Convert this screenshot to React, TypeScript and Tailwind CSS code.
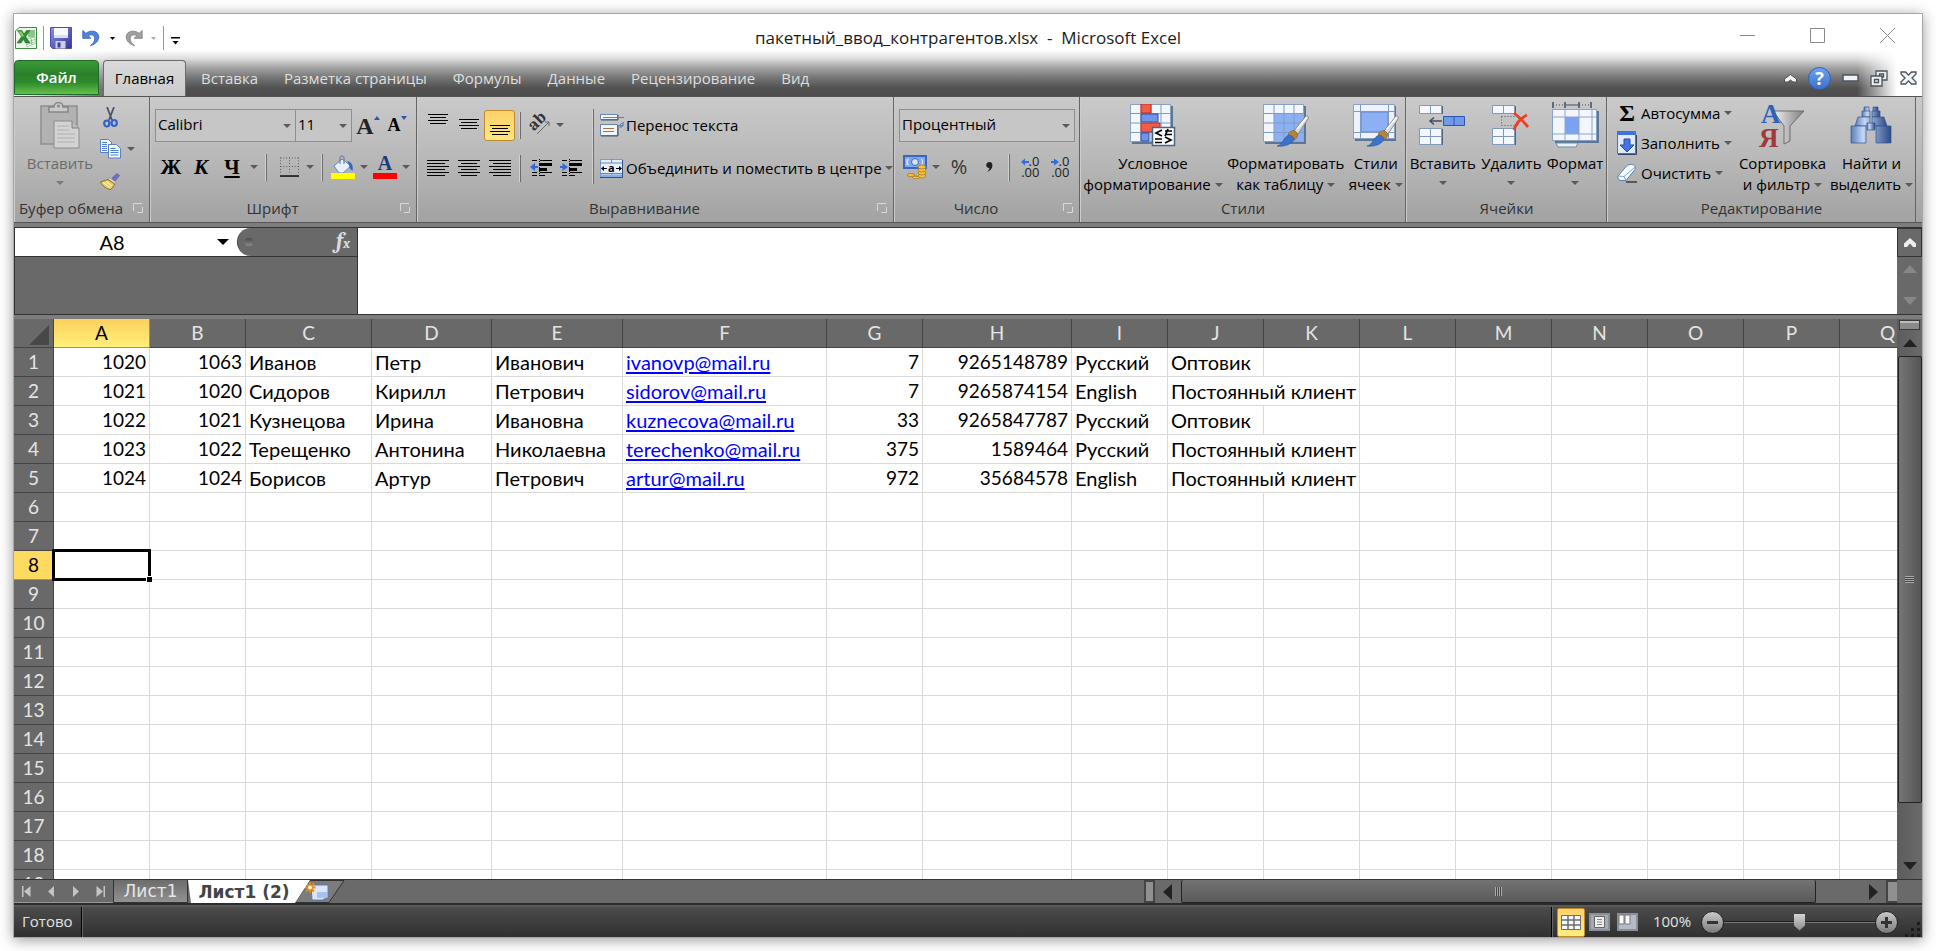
import { useState, type ReactNode } from 'react';
import clsx from 'clsx';

type Cell = string | number;

const COLUMNS = [
  { name: 'A', width: 'w-[96px]' },
  { name: 'B', width: 'w-[96px]' },
  { name: 'C', width: 'w-[126px]' },
  { name: 'D', width: 'w-[120px]' },
  { name: 'E', width: 'w-[131px]' },
  { name: 'F', width: 'w-[204px]' },
  { name: 'G', width: 'w-[96px]' },
  { name: 'H', width: 'w-[149px]' },
  { name: 'I', width: 'w-[96px]' },
  { name: 'J', width: 'w-[96px]' },
  { name: 'K', width: 'w-[96px]' },
  { name: 'L', width: 'w-[96px]' },
  { name: 'M', width: 'w-[96px]' },
  { name: 'N', width: 'w-[96px]' },
  { name: 'O', width: 'w-[96px]' },
  { name: 'P', width: 'w-[96px]' },
  { name: 'Q', width: 'w-[96px]' },
];

const DATA: Cell[][] = [
  [1020, 1063, 'Иванов', 'Петр', 'Иванович', 'ivanovp@mail.ru', 7, 9265148789, 'Русский', 'Оптовик'],
  [1021, 1020, 'Сидоров', 'Кирилл', 'Петрович', 'sidorov@mail.ru', 7, 9265874154, 'English', 'Постоянный клиент'],
  [1022, 1021, 'Кузнецова', 'Ирина', 'Ивановна', 'kuznecova@mail.ru', 33, 9265847787, 'Русский', 'Оптовик'],
  [1023, 1022, 'Терещенко', 'Антонина', 'Николаевна', 'terechenko@mail.ru', 375, 1589464, 'Русский', 'Постоянный клиент'],
  [1024, 1024, 'Борисов', 'Артур', 'Петрович', 'artur@mail.ru', 972, 35684578, 'English', 'Постоянный клиент'],
];

const ROW_COUNT = 19;
const TABS = ['Вставка', 'Разметка страницы', 'Формулы', 'Данные', 'Рецензирование', 'Вид'];

/* ---------- small helpers ---------- */

function Arrow({ className = 'text-[#5a5a5a]' }: { className?: string }) {
  return (
    <svg width="8" height="4" viewBox="0 0 8 4" className={clsx('shrink-0', className)}>
      <path d="M0 0h8L4 4z" fill="currentColor" />
    </svg>
  );
}

function Separator({ className = 'h-[26px]' }: { className?: string }) {
  return <span className={clsx('w-[2px] shrink-0 border-l border-r border-l-[#d2d2d2] border-r-[#6c6c6c]', className)} />;
}

function Tool({ label, className, children }: { label: string; className?: string; children: ReactNode }) {
  return (
    <button type="button" aria-label={label} title={label} className={clsx('flex shrink-0 items-center justify-center', className)}>
      {children}
    </button>
  );
}

function Group({ title, launcher, children }: { title: string; launcher?: boolean; children: ReactNode }) {
  return (
    <section className="flex min-w-0 flex-col border-r border-l border-l-[#cdcdcd] border-r-[#646464]">
      <div className="flex min-h-0 flex-1">{children}</div>
      <div className="flex h-[26px] items-center pb-[2px]">
        <h2 className="flex-1 text-center text-[15px] leading-5 whitespace-nowrap text-[#333]">{title}</h2>
        {launcher && (
          <Tool label={`${title}: параметры`} className="w-[22px]">
            <svg width="10" height="10" viewBox="0 0 10 10" fill="none" stroke="#d6d8dc">
              <path d="M.5 8V.5H9M4 9.5h5.500V4" />
            </svg>
          </Tool>
        )}
      </div>
    </section>
  );
}

function BigButton({ icon, lines, arrow = 'inline', disabled, className }: { icon: ReactNode; lines: string[]; arrow?: 'inline' | 'below'; disabled?: boolean; className?: string }) {
  return (
    <button type="button" className={clsx('flex shrink-0 flex-col items-center text-[15px] leading-[21px] whitespace-nowrap', disabled && 'text-[#6b6b6b]', className)}>
      <span className="flex h-[56px] items-center justify-center">{icon}</span>
      {lines.map((line, i) => (
        <span key={line} className="flex items-center gap-[4px]">
          {line}
          {arrow === 'inline' && i === lines.length - 1 && <Arrow />}
        </span>
      ))}
      {arrow === 'below' && (
        <span className="flex h-[18px] items-center">
          <Arrow className={disabled ? 'text-[#7a7a7a]' : 'text-[#5a5a5a]'} />
        </span>
      )}
    </button>
  );
}

function Combo({ label, value, className }: { label: string; value: string; className: string }) {
  return (
    <div className={clsx('relative h-[33px] border border-[#8e8e8e] bg-[#c6c6c6]', className)}>
      <select aria-label={label} defaultValue={value} className="h-full w-full appearance-none bg-transparent pb-[3px] pl-[2px] text-[15px] outline-none">
        <option>{value}</option>
      </select>
      <span className="pointer-events-none absolute inset-y-0 right-[4px] flex items-center">
        <Arrow />
      </span>
    </div>
  );
}

/* ---------- icons ---------- */

function ExcelIcon() {
  return (
    <svg width="22" height="22" viewBox="0 0 22 22">
      <path d="M4 .5h17.500v21H.5V4z" fill="#eef6ec" stroke="#3f8a45" />
      <path d="M13 3h7v8l-7-1z" fill="#8cc68c" />
      <path d="M11 12l9-2 1 6-9 4z" fill="#fff" stroke="#8ab98a" strokeWidth=".7" />
      <path d="M12 15l8-2.500M12 17.500l8-2.800M16 11l1 7" stroke="#6aa86e" strokeWidth=".7" />
      <path d="M2.500 3.500h4.500l2 3.500 2.500-3.500H15l-4.200 6L15 16h-4.500L8.500 12.500 6 16H2l4.500-6.500z" fill="#2f8a3a" stroke="#1c6b2a" strokeWidth=".5" />
      <path d="M3.500 4.500H6.500l2.300 4.300-1.600 1.200z" fill="#8fd05c" />
    </svg>
  );
}

function SaveIcon() {
  return (
    <svg width="22" height="22" viewBox="0 0 22 22">
      <defs>
        <linearGradient id="save" x1="0" y1="0" x2="1" y2="1">
          <stop offset="0" stopColor="#8d92e0" />
          <stop offset="1" stopColor="#34349a" />
        </linearGradient>
      </defs>
      <path d="M.5.500h21v21h-19l-2-2z" fill="url(#save)" stroke="#4a4cb0" />
      <path d="M4 1h14v10H4z" fill="#f6f9ff" />
      <path d="M4 8h14v3H4z" fill="#d5def3" />
      <path d="M5.500 14h10v7.500h-10z" fill="#c9d0e6" />
      <path d="M7.500 15.500h3v5h-3z" fill="#3c3ea0" />
    </svg>
  );
}

function UndoIcon({ color, dark, flip }: { color: string; dark: string; flip?: boolean }) {
  return (
    <svg width="18" height="18" viewBox="0 0 18 18" className={clsx(flip && '-scale-x-100')}>
      <path d="M.8 1.500v7.800h8L6.200 6.800C9 4.800 12.500 6 12.800 9.200c.2 3-1.400 5-4.300 7.500 5.500-1.800 8.300-5 8.200-8.900C16.500 2.200 9.500.200 3.800 4.300z" fill={color} stroke={dark} strokeWidth=".8" />
    </svg>
  );
}

function PasteIcon() {
  return (
    <svg width="40" height="47" viewBox="0 0 40 47">
      <path d="M1 4h36v38H1z" fill="#b2b2b2" stroke="#8f8f8f" strokeWidth="1.500" />
      <path d="M9 10V5h5c0-6 9-6 9 0h5v5z" fill="#c9c9c9" stroke="#868686" strokeWidth="1.500" />
      <circle cx="18.500" cy="4" r="1.500" fill="#888" />
      <path d="M14 19h18l7 7v20H14z" fill="#d3d3d3" stroke="#8c8c8c" />
      <path d="M32 19v7h7" fill="#bbb" stroke="#7f7f7f" />
      <path d="M17 24h12M17 28h12M17 32h18M17 36h18M17 40h18" stroke="#b0b0b0" />
    </svg>
  );
}

function CutIcon() {
  return (
    <svg width="15" height="21" viewBox="0 0 15 21">
      <path d="M4 0l5 13M11 0L6 13" stroke="#47566e" strokeWidth="1.800" />
      <ellipse cx="3.800" cy="16.500" rx="2.600" ry="3" fill="none" stroke="#2f62c8" strokeWidth="2.200" />
      <ellipse cx="11.200" cy="16" rx="2.600" ry="3" fill="none" stroke="#2f62c8" strokeWidth="2.200" />
    </svg>
  );
}

function CopyIcon() {
  return (
    <svg width="22" height="20" viewBox="0 0 22 20">
      <g stroke="#5b7fc0" fill="#f4f8ff">
        <path d="M.5.500h8l3 3v10H.5z" />
        <path d="M8.500 5.500h8l4 4v9.500h-12z" />
      </g>
      <path d="M2 3.500h5M2 5.500h5M2 7.500h5M2 9.500h5M2 11.500h5M10.500 9.500h5M10.500 11.500h8M10.500 13.500h8M10.500 16h8" stroke="#4f7fd6" />
    </svg>
  );
}

function BrushIcon() {
  return (
    <svg width="20" height="17" viewBox="0 0 20 17">
      <path d="M12 5l5-4.500 2.500 2L15 8z" fill="#7670c0" stroke="#55509a" strokeWidth=".6" />
      <path d="M9 4.500l7 4.500-1.500 2L8 6.500z" fill="#d8d8d8" stroke="#777" strokeWidth=".5" />
      <path d="M8 6.500L0.500 9c2 4 6 7 10 7.500 2-1.500 3.500-3.500 4-5.500z" fill="#e9cf6e" stroke="#6f5a20" strokeWidth=".8" />
      <path d="M3 9.500l7 5M6 8.500l6 4.500" stroke="#fff6c0" />
    </svg>
  );
}

function LinesIcon({ rows }: { rows: [number, number, number][] }) {
  return (
    <svg width="22" height="32" viewBox="0 0 22 32" stroke="#000">
      {rows.map(([x1, x2, y], i) => (
        <path key={i} d={`M${x1} ${y + 0.5}H${x2}`} />
      ))}
    </svg>
  );
}

function OrientationIcon() {
  return (
    <svg width="22" height="22" viewBox="0 0 22 22" className="overflow-visible">
      <text x="4" y="17" transform="rotate(-45 5 16)" className="font-serif text-[17px] font-bold" fill="#333">ab</text>
      <path d="M8 20L20 8M20 8v4M20 8h-4" stroke="#666" fill="none" />
    </svg>
  );
}

function IndentIcon({ out }: { out?: boolean }) {
  return (
    <svg width="22" height="18" viewBox="0 0 22 18">
      <path d="M2 1.500h5M10 1.500h12M2 13.500h5M10 13.500h12M2 16.500h5M10 16.500h5" stroke="#000" />
      <path d="M9.500 0v18" stroke="#000" strokeDasharray="1 1" />
      <path d="M9 4h13v3H9zM9 9h8v3H9z" />
      {out ? <path d="M0 8l5-4v3h3v2H5v3z" fill="#2f6ae0" /> : <path d="M8 8L2.500 4v3H0v2h2.500v3z" fill="#2f6ae0" />}
    </svg>
  );
}

function WrapIcon() {
  return (
    <svg width="24" height="24" viewBox="0 0 24 24">
      <path d="M.5 1.500h17v5H.5zM.5 11.500h17v11H.5z" fill="#f1f5fc" stroke="#6b88b4" />
      <path d="M1 7h17V2M1 23h17V12" fill="none" stroke="#3c5474" />
      <path d="M3 4.500h21M3 15.500h11M3 18.500h11" stroke="#a8714a" />
      <path d="M23 9v4h-3M21.500 10.500L19.500 13l2 2" fill="none" stroke="#4468a8" />
    </svg>
  );
}

function MergeIcon() {
  return (
    <svg width="23" height="19" viewBox="0 0 23 19">
      <path d="M.5.500h22v18H.5z" fill="#e8effb" stroke="#7f9ac6" />
      <path d="M0 4h23M0 14.500h23M11.500 0v4M11.500 15v4" stroke="#6686bd" />
      <path d="M1 15.500h21v2.500H1z" fill="#88abef" />
      <path d="M0 18.500h22.500V1" fill="none" stroke="#2f4f8a" />
      <path d="M1 9.500l3-2.500v2h3v1H4v2zM22 9.500L19 7v2h-3v1h3v2z" />
      <text x="8" y="13" className="text-[11px] font-bold" fill="#000">a</text>
    </svg>
  );
}

function BordersIcon() {
  return (
    <svg width="20" height="20" viewBox="0 0 20 20" fill="none">
      <path d="M.5.500h19M.5 9.500h19M.5 0v18M10 0v18M19.500 0v18" stroke="#555" strokeDasharray="1 2" />
      <path d="M0 19.500h20" stroke="#000" strokeWidth="1.500" />
    </svg>
  );
}

function FillColorIcon() {
  return (
    <svg width="24" height="24" viewBox="0 0 24 24">
      <path d="M3 11L11 4l9 7-8 7H8z" fill="#e7effb" stroke="#6b86b0" />
      <path d="M9 9V2.500C9 .500 13 .500 13 2.500V9" fill="none" stroke="#5c7094" />
      <path d="M16 6c5 1 6.500 5 5.500 10l-3-3c0-3-1-5-2.500-7z" fill="#2f66c4" />
      <path d="M0 18h24v6H0z" fill="#ff0" />
    </svg>
  );
}

function FontColorIcon() {
  return (
    <svg width="24" height="24" viewBox="0 0 24 24" className="overflow-visible">
      <text x="12" y="15" textAnchor="middle" className="font-serif text-[20px]" fill="#1f3a7a">А</text>
      <path d="M0 18h24v6H0z" fill="#f00" />
    </svg>
  );
}

function CurrencyIcon() {
  return (
    <svg width="24" height="24" viewBox="0 0 24 24">
      <path d="M0 0h24v14H0z" fill="#3a66c0" />
      <path d="M2 2h20v10H2z" fill="#86a8e4" />
      <circle cx="12" cy="7" r="3.500" fill="#d4e1f8" stroke="#3a66c0" />
      <path d="M4 4v6M6 4c-2 0-2 6 0 6M18 4c2 0 2 6 0 6" stroke="#e8effb" fill="none" />
      <g fill="#f6c43c" stroke="#a8741a" strokeWidth=".8">
        <ellipse cx="19" cy="21" rx="4" ry="2" />
        <ellipse cx="19" cy="18" rx="4" ry="2" />
        <ellipse cx="19" cy="15" rx="4" ry="2" />
        <ellipse cx="19" cy="12" rx="4" ry="2" />
        <ellipse cx="8" cy="20" rx="4" ry="1.500" />
        <ellipse cx="13" cy="22.500" rx="3.500" ry="1.300" />
      </g>
    </svg>
  );
}

function DecimalIcon({ inc }: { inc?: boolean }) {
  return (
    <span className="flex flex-col items-end text-[13px] leading-[11px] text-[#222]">
      <span className="flex items-center">
        <svg width="8" height="8" viewBox="0 0 8 8" fill="#2f6ae0">
          {inc ? <path d="M0 4l4-3.500v2.500h4v2H4v2.500z" /> : <path d="M8 4L3 .5V3H0v2h3v2.500z" />}
        </svg>
        .0
      </span>
      <span>.00</span>
    </span>
  );
}

function SheetBase({ children }: { children?: ReactNode }) {
  return (
    <>
      <path d="M2 2h41v38H2z" fill="#5d7696" />
      <path d="M.5.500h40v37H.5z" fill="#f3f7fd" stroke="#8aa0c4" />
      {children}
      <path d="M.5 9.500h40M.5 19h40M.5 28.500h40M11 .5v37M21 .5v37M31 .5v37" stroke="#7f9ac6" />
    </>
  );
}

function PaintBrush() {
  return (
    <>
      <path d="M31 27L43 12c2 0 3 1 2 3L35 30z" fill="#d9d9d9" stroke="#7a7a7a" strokeWidth=".8" />
      <path d="M34 25L44 13" stroke="#fff" strokeWidth="1.500" />
      <path d="M25 30c2-3 5-4 7-3l3 3c0 3-2 5-4 6z" fill="#b58435" stroke="#7c5a22" strokeWidth=".6" />
      <path d="M14 42c6-1 6-9 12-11 4 1 5 3 5 5-4 5-10 7-17 6z" fill="#3d72cc" stroke="#2a549c" strokeWidth=".6" />
    </>
  );
}

function ConditionalIcon() {
  return (
    <svg width="46" height="43" viewBox="0 0 46 43">
      <SheetBase />
      <path d="M11 0h10v9H11z" fill="#f25c48" stroke="#b93022" />
      <path d="M11 10h17v8H11z" fill="#6d95ea" stroke="#2b50a4" />
      <path d="M11 19h19v9H11z" fill="#f25c48" stroke="#b93022" />
      <path d="M11 29h8v8h-8z" fill="#6d95ea" stroke="#2b50a4" />
      <path d="M22.500 23.500h22v18h-22z" fill="#fff" stroke="#4a6585" strokeWidth="1.500" />
      <path d="M32 26l-6 3 6 3M35 27h7M35 30.500h7M38 25l-3 7M35 33l6 3-6 3M25 35h7M25 38.500h7" stroke="#000" strokeWidth="1.700" fill="none" />
    </svg>
  );
}

function FormatTableIcon() {
  return (
    <svg width="46" height="43" viewBox="0 0 46 43">
      <SheetBase>
        <path d="M11 9.500h29.500v28H11z" fill="#8db0f4" />
      </SheetBase>
      <PaintBrush />
    </svg>
  );
}

function CellStylesIcon() {
  return (
    <svg width="46" height="43" viewBox="0 0 46 43">
      <path d="M2 2h41v35H2z" fill="#5d7696" />
      <path d="M.5.500h41v34H.5z" fill="#eef3fb" stroke="#8aa0c4" />
      <path d="M8 8h27v20H8z" fill="#8db0f4" stroke="#5f86cf" />
      <path d="M.5 7.500h41M.5 28.500h41M7.500.500v34M35.500.500v34" stroke="#7f9ac6" />
      <PaintBrush />
    </svg>
  );
}

function MiniCells({ y }: { y: number }) {
  return (
    <g>
      <path d={`M1 ${y + 1}h23v8H1z`} fill="#4e6684" />
      <path d={`M.5 ${y + 0.5}h22v8h-22zM11.500 ${y}v8`} fill="#f4f8fe" stroke="#8098bc" />
    </g>
  );
}

function InsertCellsIcon() {
  return (
    <svg width="47" height="41" viewBox="0 0 47 41">
      <MiniCells y={0} />
      <MiniCells y={23} />
      <MiniCells y={31} />
      <path d="M24.500 11.500h21v9h-21zM35 11.500v9" fill="#6f99ec" stroke="#2e55a8" />
      <path d="M11 16h12M15 12.500L11 16l4 3.500" fill="none" stroke="#3d4f66" strokeWidth="1.500" />
    </svg>
  );
}

function DeleteCellsIcon() {
  return (
    <svg width="38" height="41" viewBox="0 0 38 41">
      <MiniCells y={0} />
      <MiniCells y={23} />
      <MiniCells y={31} />
      <path d="M9.500 11.500h17v9h-17z" fill="none" stroke="#3a5480" strokeDasharray="1 2" />
      <path d="M22 8c4 3 9 8 14 14M35 10c-6 3-11 8-13 15" fill="none" stroke="#ee3f22" strokeWidth="2.800" />
    </svg>
  );
}

function FormatCellsIcon() {
  return (
    <svg width="47" height="46" viewBox="0 0 47 46">
      <path d="M1 0v6M13 0v6M27 0v6M39 0v6" stroke="#3d4f66" strokeWidth="1.500" />
      <path d="M1 3h12M27 3h12" stroke="#3d4f66" strokeDasharray="1 2" />
      <path d="M14 3h12" stroke="#3d4f66" />
      <path d="M3 9h44v32H3z" fill="#5d7696" />
      <path d="M.5 7.500h44v31H.5z" fill="#f3f7fd" stroke="#8aa0c4" />
      <path d="M13 15h14v17H13z" fill="#7ba2f0" />
      <path d="M.5 15h44M.5 32h44M13 7.500v31M27 7.500v31M40 7.500v31" stroke="#8aa5ce" />
      <path d="M4 41h22l-2 4H6z" fill="#e8eff6" stroke="#6f8f98" />
    </svg>
  );
}

function FillDownIcon() {
  return (
    <svg width="20" height="24" viewBox="0 0 20 24">
      <path d="M.5.500h18v22H.5z" fill="#dfe9fb" stroke="#4470c4" />
      <path d="M0 0h19v4H0z" fill="#3f74e0" />
      <path d="M1 23.500h18.500V4" fill="none" stroke="#33466a" />
      <path d="M7 8h6v6h4l-7 7-7-7h4z" fill="#3f76e4" stroke="#234fae" />
    </svg>
  );
}

function EraserIcon() {
  return (
    <svg width="20" height="19" viewBox="0 0 20 19">
      <path d="M1 12L10 1.500c2-1.500 7-1.500 8 1v3L9 16.500H3c-1.500-1-2.500-3-2-4.500z" fill="#f6f9ff" stroke="#5a7fb8" />
      <path d="M1 12l6 .5L18 3M7 12.500l2 4" fill="none" stroke="#88a6d4" />
      <path d="M9 18h11" stroke="#000" />
    </svg>
  );
}

function SortFilterIcon() {
  return (
    <svg width="46" height="46" viewBox="0 0 46 46" className="overflow-visible">
      <defs>
        <linearGradient id="funnel" x1="0" x2="1">
          <stop offset="0" stopColor="#f2f2f2" />
          <stop offset="1" stopColor="#7d7d7d" />
        </linearGradient>
      </defs>
      <path d="M14 9h31L31 24v15l-6 3V24z" fill="url(#funnel)" stroke="#6e6e6e" />
      <text x="2" y="21" className="font-serif text-[27px] font-bold" fill="#3062b8">А</text>
      <text x="0" y="45" className="font-serif text-[27px] font-bold" fill="#a03a3a">Я</text>
    </svg>
  );
}

function BinocularsIcon() {
  return (
    <svg width="42" height="39" viewBox="0 0 42 39">
      <defs>
        <linearGradient id="barrel" x1="0" x2="1">
          <stop offset="0" stopColor="#5b7db8" />
          <stop offset=".3" stopColor="#c3d6f6" />
          <stop offset="1" stopColor="#2c4a86" />
        </linearGradient>
      </defs>
      <g fill="url(#barrel)" stroke="#35538c" strokeWidth=".7">
        <path d="M14 1h5v5h-5zM23 1h5v5h-5z" />
        <path d="M12 5h8v6h-8zM22 5h8v6h-8z" />
        <path d="M8 11h12v9H5zM22 11h12l3 9H22z" />
        <path d="M1 20h15v17H1zM26 20h15v17H26z" />
        <path d="M17 17h8v7h-8z" />
      </g>
    </svg>
  );
}

/* ---------- window parts ---------- */

function Header() {
  const caption = 'flex h-full w-[70px] items-start justify-center pt-[14px]';
  return (
    <header className="bg-[linear-gradient(to_right,white,transparent_110px,transparent_calc(100%-65px),white_calc(100%-25px)),linear-gradient(to_bottom,white_36px,#e0e0e0_44px,#a2a2a2_54px,#747474_64px,#515151_74px,#4d4d4d)]">
      <div className="grid h-[46px] grid-cols-[1fr_auto_1fr] items-start">
        <div className="flex h-[44px] items-center pt-[4px] pl-[1px]">
          <ExcelIcon />
          <span className="ml-[6px] h-[24px] w-px bg-[#999]" />
          <Tool label="Сохранить" className="ml-[6px] w-[22px]"><SaveIcon /></Tool>
          <Tool label="Отменить" className="ml-[10px] w-[18px]"><UndoIcon color="#4f86dc" dark="#2a59b4" /></Tool>
          <Tool label="Список отмены" className="ml-[8px] w-[8px]"><svg width="5" height="3"><path d="M0 0h5L2.500 3z" /></svg></Tool>
          <Tool label="Вернуть" className="ml-[9px] w-[18px]"><UndoIcon color="#a0a0a0" dark="#7a7a7a" flip /></Tool>
          <Tool label="Список возврата" className="ml-[6px] w-[8px]"><svg width="5" height="3"><path d="M0 0h5L2.500 3z" fill="#aaa" /></svg></Tool>
          <span className="ml-[6px] h-[24px] w-px bg-[#999]" />
          <Tool label="Настройка панели" className="ml-[6px] w-[10px] pt-[6px]">
            <svg width="9" height="8"><path d="M0 0h9v1.500H0zM1.500 4h6L4.500 7.500z" /></svg>
          </Tool>
        </div>
        <h1 className="pt-[12px] text-[17px] leading-6 whitespace-pre text-[#1c1c1c]">пакетный_ввод_контрагентов.xlsx  -  Microsoft Excel</h1>
        <div className="flex h-full justify-end">
          <button type="button" aria-label="Свернуть" className={caption}>
            <svg width="15" height="15" stroke="#8a8a8a"><path d="M0 7.500h15" /></svg>
          </button>
          <button type="button" aria-label="Развернуть" className={caption}>
            <svg width="15" height="15" stroke="#8a8a8a" fill="none"><path d="M.5.500h14v14H.5z" /></svg>
          </button>
          <button type="button" aria-label="Закрыть" className={caption}>
            <svg width="15" height="15" stroke="#8a8a8a"><path d="M0 0l15 15M15 0L0 15" /></svg>
          </button>
        </div>
      </div>

      <nav className="flex h-[36px] items-stretch text-[15px] whitespace-nowrap text-[#dedede]">
        <button type="button" className="mb-px w-[85px] rounded-t-[4px] border border-[#1d6b2c] bg-[linear-gradient(to_bottom,#3a9a35,#2a802a_40%,#2f8a2c_65%,#66c04a)] font-semibold text-white">Файл</button>
        <button type="button" className="mr-[2px] ml-[4px] w-[83px] rounded-t-[4px] border border-b-0 border-[#6b6b6b] bg-gradient-to-b from-[#dadada] to-[#cacaca] text-black">Главная</button>
        {TABS.map((tab) => (
          <button key={tab} type="button" className="px-[13px]">{tab}</button>
        ))}
        <div className="ml-auto flex items-center gap-[10px] pr-[5px]">
          <Tool label="Свернуть ленту" className="w-[16px]">
            <svg width="13" height="9" viewBox="0 0 13 9"><path d="M.5 8v-3l6-4.500 6 4.500v3H9L6.500 6 4 8z" fill="#f4f4f4" stroke="#4a5560" /></svg>
          </Tool>
          <Tool label="Справка" className="h-[23px] w-[23px] rounded-full border border-[#2f62b4] bg-gradient-to-b from-[#6fa2ea] to-[#3a72cc] text-[18px] leading-none font-bold text-white">?</Tool>
          <Tool label="Свернуть окно книги" className="w-[18px]">
            <svg width="17" height="8"><path d="M1 1h15v6H1z" fill="#f2f2f2" stroke="#4a5560" strokeWidth="1.500" /></svg>
          </Tool>
          <Tool label="Восстановить окно книги" className="w-[20px]">
            <svg width="18" height="17" viewBox="0 0 18 17">
              <path d="M6 1h11v9H6zM9.500 4h4v3h-4z" fill="#eee" stroke="#4a5560" strokeWidth="1.300" />
              <path d="M1 6h11v10H1zM4.500 9.500h4v3h-4z" fill="#eee" stroke="#4a5560" strokeWidth="1.300" />
            </svg>
          </Tool>
          <Tool label="Закрыть книгу" className="w-[18px]">
            <svg width="17" height="14" viewBox="0 0 17 14"><path d="M1 1h4.500L8.500 4l3-3H16v2l-4 4 4 4v2h-4.500l-3-3-3 3H1v-2l4-4-4-4z" fill="#f4f4f4" stroke="#4a5560" strokeWidth="1.300" /></svg>
          </Tool>
        </div>
      </nav>
    </header>
  );
}

function Ribbon() {
  return (
    <div className="grid h-[127px] grid-cols-[136fr_267fr_477fr_186fr_326fr_201fr_309fr_6fr] border-t border-b border-t-[#555] border-b-[#555] bg-gradient-to-b from-[#cacaca] via-[#b8b8b8] to-[#a2a2a2] text-black">
      <Group title="Буфер обмена" launcher>
        <BigButton icon={<PasteIcon />} lines={['Вставить']} arrow="below" disabled className="ml-[10px] w-[70px]" />
        <div className="flex flex-col items-start gap-[2px] pt-[5px] pl-[4px]">
          <Tool label="Вырезать" className="h-[30px] w-[22px]"><CutIcon /></Tool>
          <Tool label="Копировать" className="h-[30px] w-[36px] gap-[5px]"><CopyIcon /><Arrow /></Tool>
          <Tool label="Формат по образцу" className="h-[30px] w-[22px]"><BrushIcon /></Tool>
        </div>
      </Group>

      <Group title="Шрифт" launcher>
        <div className="flex flex-1 flex-col gap-[9px] pt-[12px] pl-[4px]">
          <div className="flex h-[33px] items-center">
            <Combo label="Шрифт" value="Calibri" className="w-[141px]" />
            <Combo label="Размер шрифта" value="11" className="-ml-px w-[57px]" />
            <Tool label="Увеличить размер" className="ml-[3px] w-[26px] font-serif text-[24px] leading-none font-bold text-[#222]">
              А<svg width="6" height="4" className="mb-[16px]"><path d="M0 4h6L3 0z" fill="#2f55a8" /></svg>
            </Tool>
            <Tool label="Уменьшить размер" className="ml-[4px] w-[24px] font-serif text-[18px] leading-none font-bold text-black">
              А<svg width="6" height="4" className="mb-[16px]"><path d="M0 0h6L3 4z" fill="#2f55a8" /></svg>
            </Tool>
          </div>
          <div className="flex h-[32px] items-center font-serif text-[21px] leading-none font-bold">
            <Tool label="Полужирный" className="w-[32px]">Ж</Tool>
            <Tool label="Курсив" className="w-[28px] italic">К</Tool>
            <Tool label="Подчеркнутый" className="ml-[6px] w-[22px] underline underline-offset-2">Ч</Tool>
            <Tool label="Виды подчеркивания" className="ml-[5px] w-[12px]"><Arrow /></Tool>
            <Separator className="ml-[5px] h-[27px]" />
            <Tool label="Границы" className="ml-[13px] w-[34px] gap-[7px]"><BordersIcon /><Arrow /></Tool>
            <Separator className="ml-[7px] h-[27px]" />
            <Tool label="Цвет заливки" className="ml-[7px] w-[38px] gap-[5px]"><FillColorIcon /><Arrow /></Tool>
            <Tool label="Цвет текста" className="ml-[4px] w-[38px] gap-[5px]"><FontColorIcon /><Arrow /></Tool>
          </div>
        </div>
      </Group>

      <Group title="Выравнивание" launcher>
        <div className="flex flex-1 pt-[12px] pl-[4px]">
          <div className="flex w-[170px] flex-col gap-[11px]">
            <div className="flex h-[32px] items-center">
              <Tool label="По верхнему краю" className="w-[31px]"><LinesIcon rows={[[1, 21, 5], [3, 19, 8], [1, 21, 11], [3, 19, 14]]} /></Tool>
              <Tool label="По середине" className="w-[31px]"><LinesIcon rows={[[1, 21, 10], [3, 19, 13], [1, 21, 16], [3, 19, 19]]} /></Tool>
              <button type="button" aria-label="По нижнему краю" aria-pressed className="flex h-[31px] w-[31px] items-center justify-center rounded-[3px] border border-[#c28a30] bg-gradient-to-b from-[#fbd268] to-[#ffe880]">
                <LinesIcon rows={[[1, 21, 16], [3, 19, 19], [1, 21, 22], [3, 19, 25]]} />
              </button>
              <Separator className="ml-[4px] h-[27px]" />
              <Tool label="Ориентация" className="ml-[7px] w-[36px] gap-[5px]"><OrientationIcon /><Arrow /></Tool>
            </div>
            <div className="flex h-[32px] items-center">
              <Tool label="По левому краю" className="w-[31px]"><LinesIcon rows={[[0, 22, 8], [0, 18, 11], [0, 22, 14], [0, 18, 17], [0, 22, 20], [0, 18, 23]]} /></Tool>
              <Tool label="По центру" className="w-[31px]"><LinesIcon rows={[[0, 22, 8], [3, 19, 11], [0, 22, 14], [3, 19, 17], [0, 22, 20], [3, 19, 23]]} /></Tool>
              <Tool label="По правому краю" className="w-[31px]"><LinesIcon rows={[[0, 22, 8], [4, 22, 11], [0, 22, 14], [4, 22, 17], [0, 22, 20], [4, 22, 23]]} /></Tool>
              <Separator className="ml-[4px] h-[27px]" />
              <Tool label="Уменьшить отступ" className="ml-[7px] w-[26px]"><IndentIcon out /></Tool>
              <Tool label="Увеличить отступ" className="ml-[4px] w-[26px]"><IndentIcon /></Tool>
            </div>
          </div>
          <Separator className="h-[75px]" />
          <div className="flex flex-col gap-[11px] pl-[6px] text-[15px] whitespace-nowrap">
            <button type="button" className="flex h-[32px] items-center gap-[2px]"><WrapIcon />Перенос текста</button>
            <button type="button" className="flex h-[32px] items-center gap-[3px]"><MergeIcon />Объединить и поместить в центре<Arrow /></button>
          </div>
        </div>
      </Group>

      <Group title="Число" launcher>
        <div className="flex flex-1 flex-col gap-[9px] px-[4px] pt-[12px]">
          <Combo label="Числовой формат" value="Процентный" className="w-full" />
          <div className="flex h-[32px] items-center">
            <Tool label="Денежный формат" className="ml-[3px] w-[38px] gap-[5px]"><CurrencyIcon /><Arrow /></Tool>
            <Tool label="Процентный формат" className="ml-[6px] w-[26px] text-[20px] leading-6 text-[#333]">%</Tool>
            <Tool label="Формат с разделителями" className="ml-[6px] w-[22px]">
              <svg width="7" height="10" viewBox="0 0 7 10"><path d="M3.300 0C5.800 0 6.800 2 6.300 4.500 5.900 7 4 9 1 10c1.500-1.500 2.300-2.700 2.300-4C1 6 .2 4.500.2 3S1.500 0 3.300 0z" fill="#222" /></svg>
            </Tool>
            <Separator className="ml-[8px] h-[27px]" />
            <Tool label="Увеличить разрядность" className="ml-[9px] w-[22px]"><DecimalIcon inc /></Tool>
            <Tool label="Уменьшить разрядность" className="ml-[8px] w-[22px]"><DecimalIcon /></Tool>
          </div>
        </div>
      </Group>

      <Group title="Стили">
        <div className="flex flex-1 justify-around">
          <BigButton icon={<ConditionalIcon />} lines={['Условное', 'форматирование']} />
          <BigButton icon={<FormatTableIcon />} lines={['Форматировать', 'как таблицу']} />
          <BigButton icon={<CellStylesIcon />} lines={['Стили', 'ячеек']} />
        </div>
      </Group>

      <Group title="Ячейки">
        <div className="flex flex-1 justify-around">
          <BigButton icon={<InsertCellsIcon />} lines={['Вставить']} arrow="below" />
          <BigButton icon={<DeleteCellsIcon />} lines={['Удалить']} arrow="below" />
          <BigButton icon={<FormatCellsIcon />} lines={['Формат']} arrow="below" />
        </div>
      </Group>

      <Group title="Редактирование">
        <div className="flex flex-1 pl-[9px]">
          <div className="flex w-[120px] flex-col items-start pt-px text-[15px] whitespace-nowrap">
            <button type="button" className="flex h-[30px] items-center gap-[4px]"><span className="w-[20px] font-serif text-[24px] leading-7 font-bold">Σ</span>Автосумма<Arrow /></button>
            <button type="button" className="flex h-[30px] items-center gap-[4px]"><FillDownIcon />Заполнить<Arrow /></button>
            <button type="button" className="flex h-[30px] items-center gap-[4px]"><EraserIcon />Очистить<Arrow /></button>
          </div>
          <div className="flex flex-1 justify-around">
            <BigButton icon={<SortFilterIcon />} lines={['Сортировка', 'и фильтр']} />
            <BigButton icon={<BinocularsIcon />} lines={['Найти и', 'выделить']} />
          </div>
        </div>
      </Group>
      <span />
    </div>
  );
}

function FormulaBar() {
  return (
    <div className="flex h-[96px] border-t-4 border-b-4 border-[#7d7d7d] bg-[#696969]">
      <div className="w-[344px] border-t border-r border-b border-l border-[#333]">
        <div className="flex h-[29px] border-b border-[#333] bg-white">
          <input aria-label="Имя" defaultValue="A8" className="w-[194px] min-w-0 bg-white text-center font-['Lato',sans-serif] text-[20px] outline-none" />
          <Tool label="Список имен" className="w-[28px]"><svg width="12" height="6"><path d="M0 0h12L6 6z" /></svg></Tool>
          <div className="flex flex-1 items-center justify-between rounded-l-full border-l border-[#444] bg-[#696969] pr-[7px] pl-[7px]">
            <span className="h-[8px] w-[8px] rounded-[3px] bg-gradient-to-b from-[#4a4a4a] to-[#8a8a8a]" />
            <button type="button" aria-label="Вставить функцию" className="font-serif text-[22px] leading-6 font-bold text-[#dcdcdc] italic">f<span className="text-[14px]">x</span></button>
          </div>
        </div>
      </div>
      <textarea aria-label="Строка формул" className="min-w-0 flex-1 resize-none border-t border-b border-[#333] bg-white outline-none" />
      <div className="flex w-[25px] flex-col items-center border-t border-b border-[#333]">
        <Tool label="Свернуть строку формул" className="h-[29px] w-full border border-[#333]">
          <svg width="12" height="9" viewBox="0 0 12 9"><path d="M0 9V5.500L6 0l6 5.500V9H9L6 5.500 3 9z" fill="#eee" /></svg>
        </Tool>
        <Tool label="Вверх" className="h-[24px] w-full"><svg width="14" height="8"><path d="M0 8h14L7 0z" fill="#878787" /></svg></Tool>
        <Tool label="Вниз" className="mt-[8px] h-[24px] w-full"><svg width="14" height="8"><path d="M0 0h14L7 8z" fill="#878787" /></svg></Tool>
      </div>
    </div>
  );
}

function Sheet() {
  const head = 'h-[29px] border-r border-b border-[#444] p-0 leading-[28px] font-normal';
  const cell = 'h-[29px] border-r border-b border-[#dadada] px-[3px] py-0 leading-[28px]';

  const renderRow = (r: number) => {
    const row = DATA[r] ?? [];
    const cells: ReactNode[] = [];
    for (let c = 0; c < COLUMNS.length; c++) {
      const value = row[c];
      // long text runs over into the empty neighbour
      const wide = value === 'Постоянный клиент';
      const active = r === 7 && c === 0;
      cells.push(
        <td key={c} colSpan={wide ? 2 : 1} className={clsx(cell, typeof value === 'number' ? 'text-right' : 'text-[20px]', active && 'relative')}>
          {typeof value === 'string' && value.includes('@') ? (
            <a href={`mailto:${value}`} className="text-[#0000ff] underline underline-offset-2">{value}</a>
          ) : (
            value
          )}
          {active && (
            <span className="pointer-events-none absolute -inset-[2px] border-[3px] border-black">
              <span className="absolute -right-[4px] -bottom-[4px] h-[6px] w-[6px] border-t border-l border-white bg-black" />
            </span>
          )}
        </td>,
      );
      if (wide) c++;
    }
    return cells;
  };

  return (
    <div className="min-h-0 min-w-0 flex-1 overflow-hidden bg-white">
      <table className="w-px table-fixed border-separate border-spacing-0 font-['Lato',sans-serif] text-[19px] whitespace-nowrap text-black">
        <colgroup>
          <col className="w-[40px]" />
          {COLUMNS.map((col) => <col key={col.name} className={col.width} />)}
        </colgroup>
        <thead>
          <tr className="bg-[#696969] text-[#e4e4e4]">
            <th aria-label="Выделить все" className={head}>
              <svg width="20" height="20" className="mt-[4px] ml-[15px]"><path d="M20 0v20H0z" fill="#484848" /></svg>
            </th>
            {COLUMNS.map((col, i) => (
              <th key={col.name} className={clsx(head, i === 0 && 'border-[#c28a30] bg-gradient-to-b from-[#fcd05c] to-[#fff07a] text-black')}>{col.name}</th>
            ))}
          </tr>
        </thead>
        <tbody>
          {Array.from({ length: ROW_COUNT }, (_, r) => (
            <tr key={r}>
              <th scope="row" className={clsx(head, r === 7 ? 'border-[#c28a30] bg-[#ffda60] text-black' : 'bg-[#696969] text-[#e4e4e4]')}>{r + 1}</th>
              {renderRow(r)}
            </tr>
          ))}
        </tbody>
      </table>
    </div>
  );
}

function VerticalScroll() {
  return (
    <div className="flex w-[25px] flex-col items-center bg-gradient-to-r from-[#5c5c5c] to-[#6a6a6a] pt-px">
      <span className="h-[10px] w-[21px] border border-[#3a3a3a] bg-[#8a8a8a] shadow-[inset_0_2px_0_#bbb]" />
      <Tool label="Прокрутить вверх" className="h-[26px] w-full"><svg width="14" height="8"><path d="M0 8h14L7 0z" fill="#222" /></svg></Tool>
      <div className="flex w-[24px] flex-[447] flex-col items-center justify-center rounded-[2px] border border-[#222] bg-gradient-to-r from-[#757575] to-[#555]">
        <span className="h-px w-[9px] bg-[#aaa]" />
        <span className="h-px w-[9px] bg-[#444]" />
        <span className="h-px w-[9px] bg-[#aaa]" />
        <span className="h-px w-[9px] bg-[#444]" />
        <span className="h-px w-[9px] bg-[#aaa]" />
        <span className="h-px w-[9px] bg-[#444]" />
        <span className="h-px w-[9px] bg-[#aaa]" />
      </div>
      <div className="flex-[50]" />
      <Tool label="Прокрутить вниз" className="h-[26px] w-full"><svg width="14" height="8"><path d="M0 0h14L7 8z" fill="#222" /></svg></Tool>
    </div>
  );
}

function SheetTabs() {
  const nav = 'w-[24px]';
  return (
    <div className="flex h-[26px] items-stretch border-t border-b-2 border-t-[#333] border-b-[#2c2c2c] bg-[#6a6a6a] font-['DejaVu_Sans',sans-serif] text-[17px]">
      <div className="flex w-[99px] items-center justify-around border-b border-[#999]">
        <Tool label="Первый лист" className={nav}><svg width="9" height="11"><path d="M0 0h1.500v11H0zM8.500 0v11L2 5.500z" fill="#c4c4c4" /></svg></Tool>
        <Tool label="Предыдущий лист" className={nav}><svg width="6" height="11"><path d="M6 0v11L0 5.500z" fill="#c4c4c4" /></svg></Tool>
        <Tool label="Следующий лист" className={nav}><svg width="6" height="11"><path d="M0 0v11l6-5.500z" fill="#c4c4c4" /></svg></Tool>
        <Tool label="Последний лист" className={nav}><svg width="9" height="11"><path d="M7.500 0H9v11H7.500zM.500 0v11L7 5.500z" fill="#c4c4c4" /></svg></Tool>
      </div>
      <button type="button" className="w-[75px] border border-t-0 border-[#333] bg-gradient-to-b from-[#6c6c6c] to-[#929292] leading-[22px] text-[#e6e6e6]">Лист1</button>
      <button type="button" className="w-[122px] bg-white pr-[10px] leading-[22px] font-bold text-[#444] [clip-path:polygon(0_0,100%_0,107px_100%,3px_100%)]">Лист1 (2)</button>
      <Tool label="Вставить лист" className="-ml-[15px] w-[50px]">
        <svg width="50" height="23" viewBox="0 0 50 23">
          <path d="M15 .5H49L34 22.500H0L15 .5z" fill="#7c7c7c" stroke="#333" />
          <path d="M16 5h17v13l-4 1-1 1H17z" fill="#dbe6fa" stroke="#5b79b4" />
          <path d="M22 12h10v6H22z" fill="#a9c0ec" />
          <path d="M15 2v11M9.500 7.500h11M11 3.500l8 8M19 3.500l-8 8" stroke="#e08a1c" strokeWidth="2" />
          <circle cx="15" cy="7.500" r="2" fill="#fff3c4" />
        </svg>
      </Tool>
      <div className="ml-auto flex w-[40.8%] items-stretch">
        <span className="w-[11px] border-2 border-[#444] bg-[#909090]" />
        <Tool label="Прокрутить влево" className="w-[26px]"><svg width="9" height="16"><path d="M9 0v16L0 8z" fill="#222" /></svg></Tool>
        <div className="flex flex-[635] items-center justify-center rounded-[2px] border border-t-0 border-[#222] bg-gradient-to-b from-[#737373] to-[#5a5a5a]">
          <span className="h-[9px] w-px bg-[#aaa]" />
          <span className="h-[9px] w-px bg-[#444]" />
          <span className="h-[9px] w-px bg-[#aaa]" />
          <span className="h-[9px] w-px bg-[#444]" />
          <span className="h-[9px] w-px bg-[#aaa]" />
          <span className="h-[9px] w-px bg-[#444]" />
          <span className="h-[9px] w-px bg-[#aaa]" />
        </div>
        <div className="flex-[44]" />
        <Tool label="Прокрутить вправо" className="w-[26px]"><svg width="9" height="16"><path d="M0 0v16l9-8z" fill="#222" /></svg></Tool>
        <span className="w-[11px] border-2 border-r-0 border-[#444] bg-[#909090]" />
        <span className="w-[25px]" />
      </div>
    </div>
  );
}

function StatusBar() {
  const [zoom, setZoom] = useState(100);
  const round = 'h-[23px] w-[23px] rounded-full border border-[#222] bg-gradient-to-b from-[#c9c9c9] to-[#7b7b7b]';
  return (
    <footer className="flex h-[32px] items-center border-t-2 border-[#595959] bg-gradient-to-b from-[#4c4c4c] to-[#303030] text-[15px] text-[#e2e2e2]">
      <span className="w-[67px] pb-px pl-[8px]">Готово</span>
      <span className="h-full w-[2px] border-l border-r border-l-black border-r-[#666]" />
      <span className="ml-auto h-full w-[2px] border-l border-r border-l-black border-r-[#666]" />
      <button type="button" aria-label="Обычный" aria-pressed className="ml-[4px] flex h-[29px] w-[28px] items-center justify-center rounded-[2px] border border-[#c28a30] bg-gradient-to-b from-[#fbd268] to-[#ffee80]">
        <svg width="20" height="15" viewBox="0 0 20 15">
          <path d="M.5.500h19v14H.5z" fill="#f4f7fc" stroke="#6e6e6e" />
          <path d="M1 5h18M1 10h18M7 0v15M13 0v15" stroke="#6e6e6e" strokeWidth="1.500" />
        </svg>
      </button>
      <Tool label="Разметка страницы" className="ml-[3px] w-[22px]">
        <svg width="21" height="18" viewBox="0 0 21 18">
          <path d="M1 1h19v16H1z" fill="#a4aab4" stroke="#8a8f98" strokeWidth="2" />
          <path d="M5.500 3.500h10v11h-10z" fill="#eee" stroke="#666" />
          <path d="M8 6.500h5M8 9h5M8 11.500h5" stroke="#888" />
        </svg>
      </Tool>
      <Tool label="Страничный режим" className="ml-[6px] w-[22px]">
        <svg width="21" height="18" viewBox="0 0 21 18">
          <path d="M1 1h19v16H1z" fill="#b4bac6" stroke="#8a8f98" strokeWidth="2" />
          <path d="M2 2h5v9H2zM8 2h5v9H8z" fill="#fafafa" stroke="#777" />
        </svg>
      </Tool>
      <button type="button" className="ml-[9px] w-[50px] pb-px">{zoom}%</button>
      <Tool label="Уменьшить масштаб" className={clsx('ml-[4px]', round)}><svg width="11" height="3"><path d="M0 0h11v3H0z" fill="#333" /></svg></Tool>
      <input
        type="range"
        aria-label="Масштаб"
        min={0}
        max={200}
        value={zoom}
        onChange={(e) => setZoom(Number(e.target.value))}
        className="h-[20px] w-[151px] appearance-none bg-[linear-gradient(to_bottom,transparent_9px,#1e1e1e_9px,#1e1e1e_10px,#777_10px,#777_11px,transparent_11px)] [&::-webkit-slider-thumb]:h-[17px] [&::-webkit-slider-thumb]:w-[11px] [&::-webkit-slider-thumb]:appearance-none [&::-webkit-slider-thumb]:bg-gradient-to-b [&::-webkit-slider-thumb]:from-[#d4d4d4] [&::-webkit-slider-thumb]:to-[#8a8a8a] [&::-webkit-slider-thumb]:[clip-path:polygon(0_0,100%_0,100%_70%,50%_100%,0_70%)]"
      />
      <Tool label="Увеличить масштаб" className={round}><svg width="11" height="11"><path d="M4 0h3v4h4v3H7v4H4V7H0V4h4z" fill="#333" /></svg></Tool>
      <svg width="16" height="15" viewBox="0 0 16 15" className="mr-px ml-[7px] self-end">
        <path d="M12 0h3v3h-3zM6 6h3v3H6zM12 6h3v3h-3zM0 12h3v3H0zM6 12h3v3H6zM12 12h3v3h-3z" fill="#1c1c1c" />
      </svg>
    </footer>
  );
}

export default function App() {
  return (
    <div className="h-screen bg-white p-[13px] font-['Open_Sans','Noto_Sans',sans-serif]">
      <main className="flex h-full flex-col overflow-hidden border border-[#a6a6a6] bg-white shadow-[0_2px_13px_rgba(0,0,0,0.4)]">
        <Header />
        <Ribbon />
        <FormulaBar />
        <div className="flex min-h-0 flex-1">
          <Sheet />
          <VerticalScroll />
        </div>
        <SheetTabs />
        <StatusBar />
      </main>
    </div>
  );
}
